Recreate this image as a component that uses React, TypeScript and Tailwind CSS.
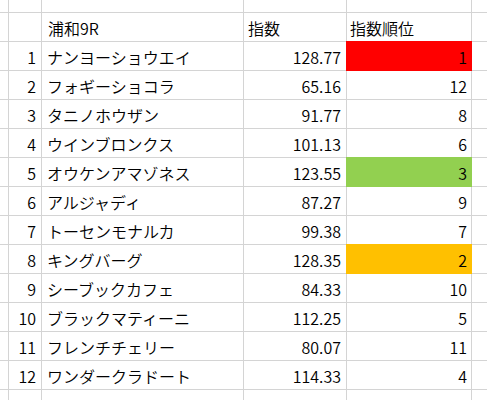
import React from "react";

type Row = { n: number; name: string; idx: string; rank: number; fill?: string };

const rows: Row[] = [
  { n: 1, name: "ナンヨーショウエイ", idx: "128.77", rank: 1, fill: "red" },
  { n: 2, name: "フォギーショコラ", idx: "65.16", rank: 12 },
  { n: 3, name: "タニノホウザン", idx: "91.77", rank: 8 },
  { n: 4, name: "ウインブロンクス", idx: "101.13", rank: 6 },
  { n: 5, name: "オウケンアマゾネス", idx: "123.55", rank: 3, fill: "green" },
  { n: 6, name: "アルジャディ", idx: "87.27", rank: 9 },
  { n: 7, name: "トーセンモナルカ", idx: "99.38", rank: 7 },
  { n: 8, name: "キングバーグ", idx: "128.35", rank: 2, fill: "orange" },
  { n: 9, name: "シーブックカフェ", idx: "84.33", rank: 10 },
  { n: 10, name: "ブラックマティーニ", idx: "112.25", rank: 5 },
  { n: 11, name: "フレンチチェリー", idx: "80.07", rank: 11 },
  { n: 12, name: "ワンダークラドート", idx: "114.33", rank: 4 },
];

const fillClass: Record<string, string> = {
  red: "bg-[#ff0000] shadow-[0_0_0_1px_#ff0000]",
  green: "bg-[#92d050] shadow-[0_0_0_1px_#92d050]",
  orange: "bg-[#ffc000] shadow-[0_0_0_1px_#ffc000]",
};

const cell = "bg-white flex items-center pt-[2px] leading-none";

export default function App() {
  return (
    <div
      className="w-[487px] h-[400px] overflow-hidden bg-white text-[16px] font-[350] text-black"
      style={{ fontFamily: '"Noto Sans CJK JP", "Noto Sans", sans-serif' }}
    >
      <div className="grid grid-cols-[8px_32px_201px_102px_124px_1fr] grid-rows-[12px_repeat(13,28px)_20px] gap-px bg-[#d4d4d4]">
        {/* top partial row */}
        <div className="bg-white" />
        <div className="bg-white" />
        <div className="bg-white" />
        <div className="bg-white" />
        <div className="bg-white" />
        <div className="bg-white" />
        {/* header */}
        <div className="bg-white" />
        <div className="bg-white" />
        <div className={`${cell} pl-[6px]`}>浦和9R</div>
        <div className={`${cell} pl-[4px]`}>指数</div>
        <div className={`${cell} pl-[3px]`}>指数順位</div>
        <div className="bg-white" />
        {rows.map((r) => (
          <React.Fragment key={r.n}>
            <div className="bg-white" />
            <div className={`${cell} justify-end pr-[5px]`}>{r.n}</div>
            <div className={`${cell} pl-[5px]`}>{r.name}</div>
            <div className={`${cell} justify-end pr-[5px]`}>{r.idx}</div>
            <div
              className={`flex items-center pt-[2px] leading-none justify-end pr-[4px] ${
                r.fill ? fillClass[r.fill] : "bg-white"
              }`}
            >
              {r.rank}
            </div>
            <div className="bg-white" />
          </React.Fragment>
        ))}
        {/* bottom partial row */}
        <div className="bg-white" />
        <div className="bg-white" />
        <div className="bg-white" />
        <div className="bg-white" />
        <div className="bg-white" />
        <div className="bg-white" />
      </div>
    </div>
  );
}
